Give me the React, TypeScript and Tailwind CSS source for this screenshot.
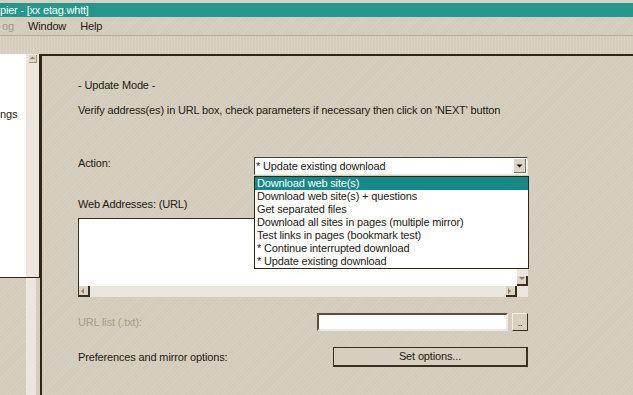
import React from 'react'

const items = [
  'Download web site(s)',
  'Download web site(s) + questions',
  'Get separated files',
  'Download all sites in pages (multiple mirror)',
  'Test links in pages (bookmark test)',
  '* Continue interrupted download',
  '* Update existing download',
]

const hatch =
  'bg-[#d4ccbc] bg-[repeating-linear-gradient(135deg,#d7d0c1_0px,#d7d0c1_1px,#d3cbbb_1px,#d3cbbb_3px)]'

function Arrow({ dir }: { dir: 'up' | 'down' | 'left' | 'right' }) {
  const pts = {
    up: '1,4 4,1 7,4',
    down: '1,1 4,4 7,1',
    left: '4,1 1,4 4,7',
    right: '1,1 4,4 1,7',
  }[dir]
  return (
    <svg width="8" height="8" viewBox="0 0 8 8">
      <polygon points={pts} fill="#8c826e" />
    </svg>
  )
}

export default function App() {
  return (
    <div
      className={`w-[633px] h-[395px] overflow-hidden flex flex-col text-[11px] tracking-[-0.15px] text-[#1e1a12] ${hatch}`}
      style={{ fontFamily: '"Liberation Sans", Arial, sans-serif' }}
    >
      {/* title bar */}
      <div className="h-[3px] bg-[#d8d1c2]" />
      <div className="h-[14px] bg-[#24978c] flex items-center text-white text-[11px] tracking-[-0.2px] leading-none whitespace-nowrap">
        pier - [xx etag.whtt]
      </div>

      {/* menu */}
      <div className="h-[18px] flex items-center gap-[14px] whitespace-nowrap">
        <span className="text-[#a39984] ml-[2px]">og</span>
        <span>Window</span>
        <span>Help</span>
      </div>
      <div className="h-px bg-[#b8ae98]" />
      <div className="h-[18px] bg-[repeating-linear-gradient(90deg,#dbd4c6_0px,#dbd4c6_1px,#d4ccbc_1px,#d4ccbc_3px)]" />

      {/* body */}
      <div className="flex-1 flex min-h-0">
        <div className="w-[40px] flex flex-col">
          <div className="h-[224px] flex border-r border-b border-[#2f2616]">
            <div className="w-[26px] bg-white overflow-hidden pt-[52px] whitespace-nowrap">
              <span className="block">ngs</span>
            </div>
            <div className="flex-1 bg-[#ebe7de] flex flex-col items-center pt-px">
              <div className="w-[8px] h-[8px] bg-[#ddd6c8] border-r border-b border-[#9c937f] flex items-center justify-center">
                <Arrow dir="up" />
              </div>
            </div>
          </div>
          <div className="flex-1 flex">
            <div className="w-[26px]" />
            <div className="w-[10px] bg-[#ebe7de]" />
          </div>
        </div>

        <div className="flex-1 border-l-2 border-t-2 border-[#2f2616] pl-[36px] whitespace-nowrap">
          <div className="mt-[23px] h-[13px] leading-[13px]">- Update Mode -</div>
          <div className="mt-[12px] h-[13px] leading-[13px]">
            Verify address(es) in URL box, check parameters if necessary then click on 'NEXT' button
          </div>

          <div className="mt-[40px] w-[450px] h-[18px] flex items-center justify-between relative">
            <span className="-mt-[6px]">Action:</span>
            <div className="w-[274px] h-[18px] bg-white border border-t-[#4a4030] border-l-[#4a4030] border-r-[#ece8df] border-b-[#ece8df] flex items-center">
              <span className="flex-1 pl-[1px]">* Update existing download</span>
              <div className="w-[12px] h-[14px] mr-px bg-[#ddd6c8] border-r border-b border-[#7d735f] flex items-center justify-center">
                <svg width="7" height="4" viewBox="0 0 7 4">
                  <polygon points="0.5,0.5 6.5,0.5 3.5,3.5" fill="#111" />
                </svg>
              </div>
            </div>
            <div className="absolute left-[176px] top-[19px] w-[275px] bg-white border border-[#2f2616] z-10">
              {items.map((t, i) => (
                <div
                  key={t}
                  className={`h-[13px] leading-[13px] pl-[2px] ${i === 0 ? 'bg-[#138a88] text-white' : ''}`}
                >
                  {t}
                </div>
              ))}
            </div>
          </div>

          <div className="mt-[23px] h-[13px] leading-[13px]">Web Addresses: (URL)</div>

          <div className="mt-[7px] w-[450px] h-[79px] border-t border-l border-[#3a3020] flex flex-col">
            <div className="flex-1 flex">
              <div className="flex-1 bg-white" />
              <div className="w-[11px] bg-[#ebe7de] flex flex-col justify-end">
                <div className="h-[10px] bg-[#ddd6c8] border-r-2 border-b-2 border-[#3a3020] flex items-center justify-center">
                  <Arrow dir="down" />
                </div>
              </div>
            </div>
            <div className="h-[11px] bg-[#ebe7de] flex">
              <div className="w-[11px] bg-[#ddd6c8] border-r-2 border-b-2 border-[#3a3020] flex items-center justify-center">
                <Arrow dir="left" />
              </div>
              <div className="flex-1" />
              <div className="w-[11px] bg-[#ddd6c8] border-r-2 border-b-2 border-[#3a3020] flex items-center justify-center">
                <Arrow dir="right" />
              </div>
              <div className="w-[11px]" />
            </div>
          </div>

          <div className="mt-[16px] w-[450px] h-[18px] flex items-center">
            <span className="text-[#a69c87] w-[239px]">URL list (.txt):</span>
            <div className="w-[191px] h-[18px] bg-white border-2 border-t-[#5a5040] border-l-[#5a5040] border-r-[#ece8df] border-b-[#ece8df]" />
            <div className="ml-[4px] w-[16px] h-[18px] bg-[#d8d1c2] border border-t-[#f2efe8] border-l-[#f2efe8] border-r-[#3a3020] border-b-[#3a3020] flex items-end justify-center pb-[2px] leading-none text-[9px]">
              ..
            </div>
          </div>

          <div className="mt-[16px] w-[450px] h-[20px] flex items-center">
            <span className="w-[255px]">Preferences and mirror options:</span>
            <div className="w-[195px] h-[20px] border border-[#3a3020] border-r-2 border-b-2 bg-[#d6cfc0] flex items-center justify-center">
              Set options...
            </div>
          </div>
        </div>
      </div>
    </div>
  )
}
